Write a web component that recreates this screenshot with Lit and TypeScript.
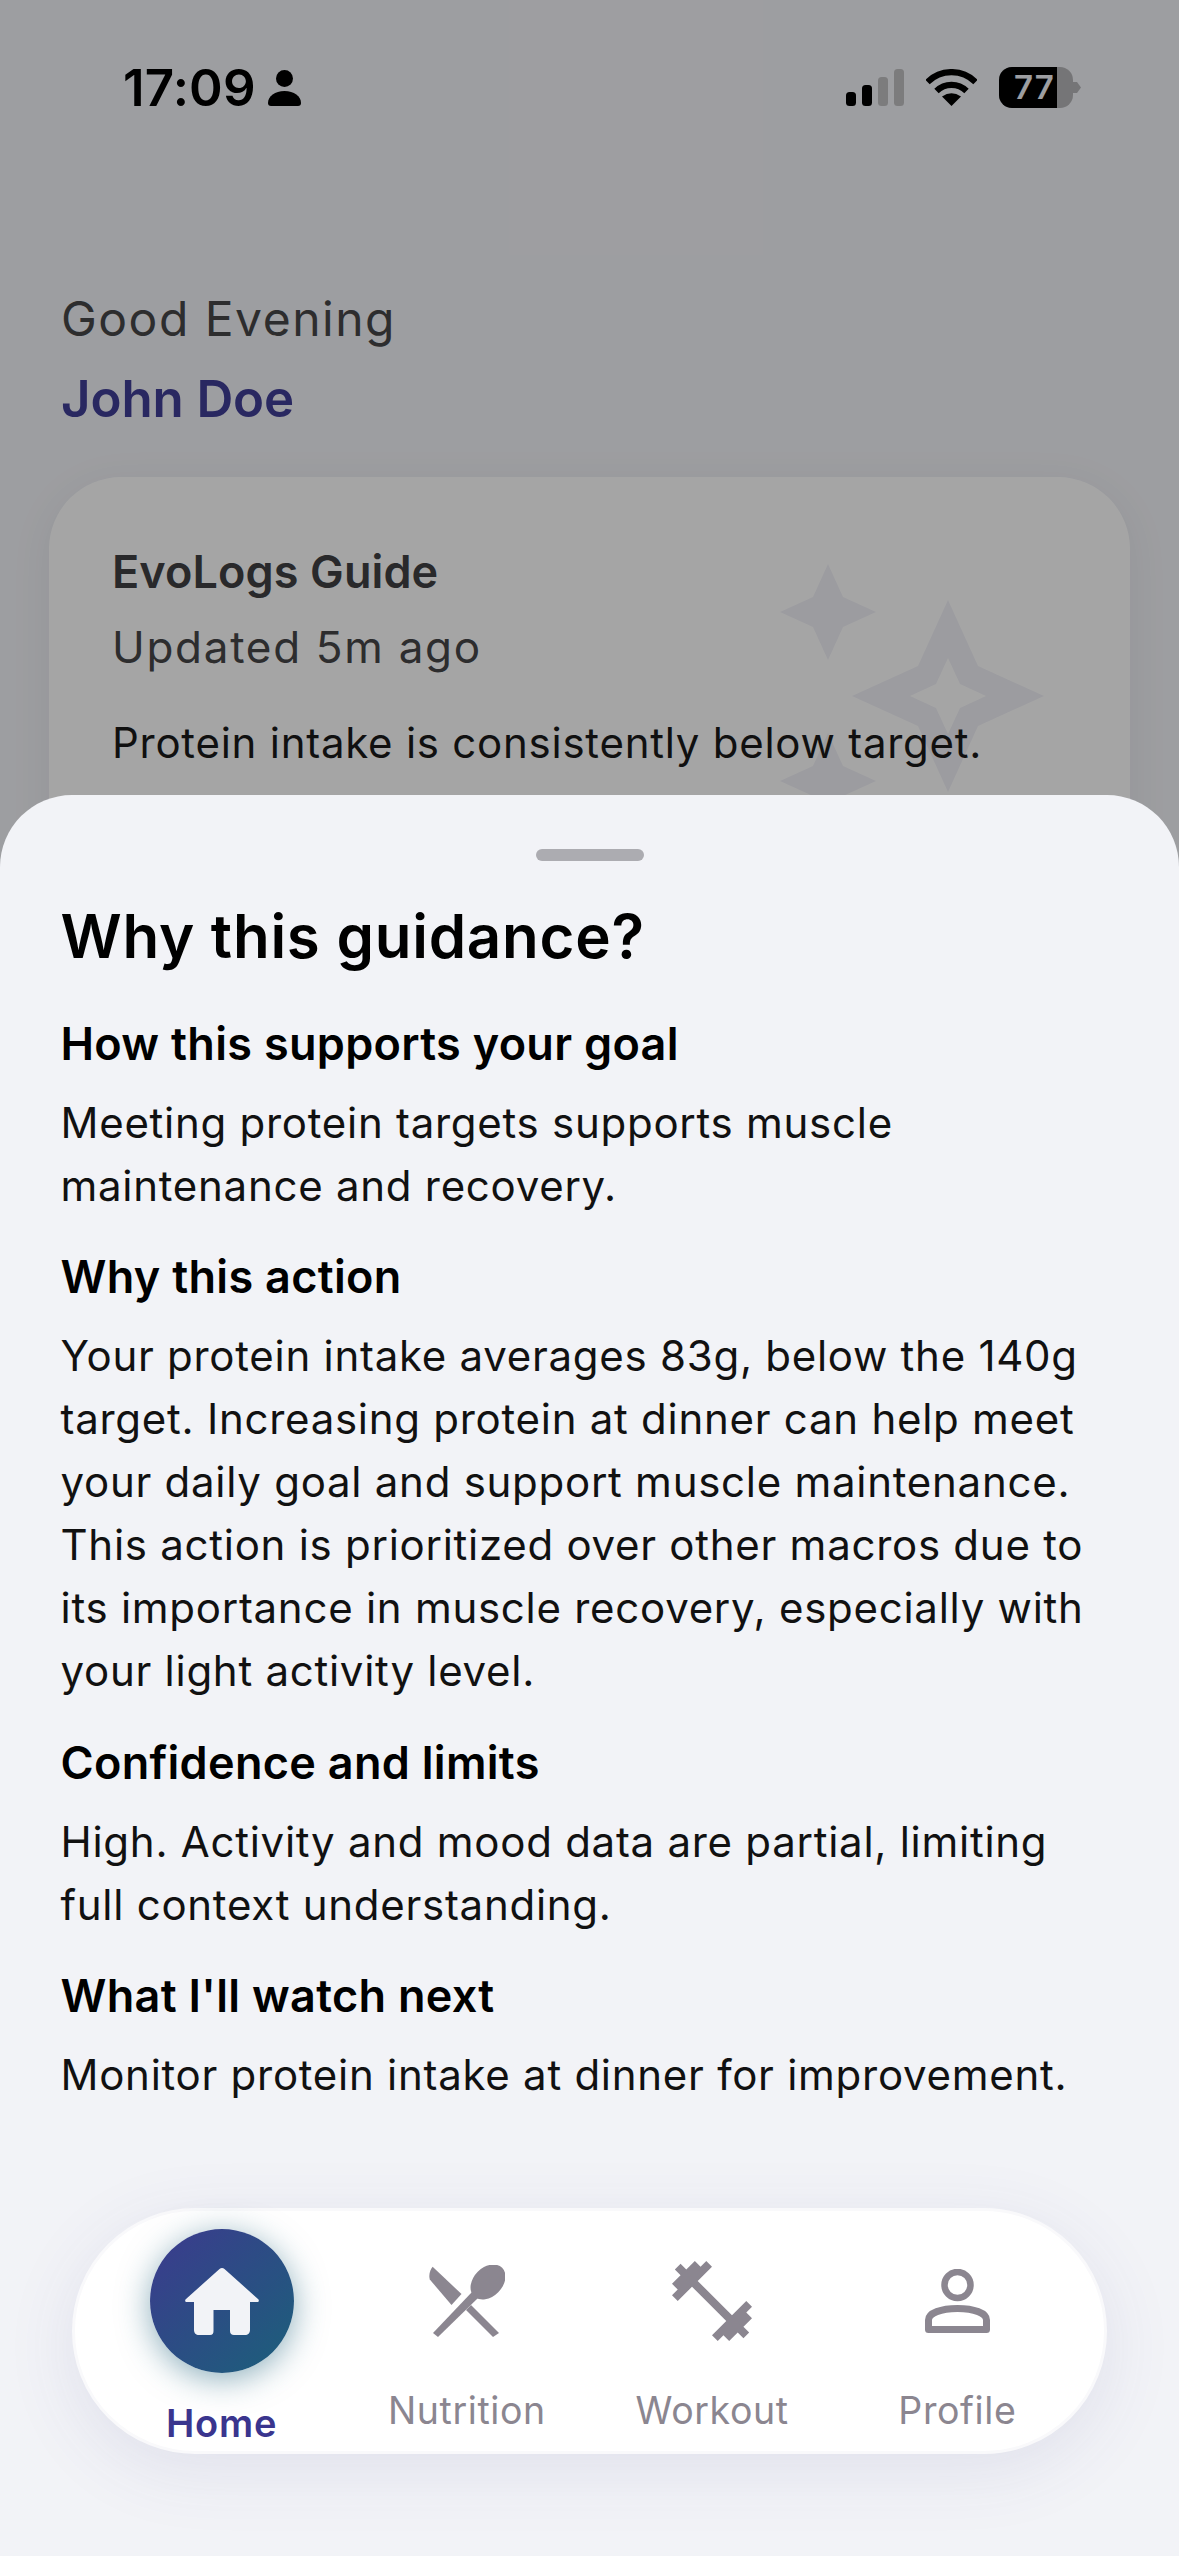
import { LitElement, html, css, svg } from "lit";
import { customElement } from "lit/decorators.js";

const navItems = [
  { label: "Nutrition", icon: svg`<svg class="ic" width="76" height="72" viewBox="0 0 76 72"><path d="M3.6 1.7C1 5 -.5 10 .8 14.5L22.5 40 32.5 29Z"/><path d="M42 40 70 68 64 72 37 45Z"/><ellipse cx="59" cy="17" rx="20" ry="14.5" transform="rotate(-45 59 17)"/><path d="M43 27 4 68 9 72 49 33Z"/></svg>` },
  { label: "Workout", icon: svg`<svg class="ic" width="96" height="96" viewBox="0 0 24 24"><path d="M20.57 14.86L22 13.43 20.57 12 17 15.57 8.43 7 12 3.43 10.57 2 9.14 3.43 7.71 2 5.57 4.14 4.14 2.71 2.71 4.14l1.43 1.43L2 7.71l1.43 1.43L2 10.57 3.43 12 7 8.43 15.57 17 12 20.57 13.43 22l1.43-1.43L16.29 22l2.14-2.14 1.43 1.43 1.43-1.43-1.43-1.43L22 16.29z"/></svg>` },
  { label: "Profile", icon: svg`<svg class="ic" width="65" height="64" viewBox="0 0 65 64"><circle cx="32.5" cy="16" r="13" fill="none" stroke="#8b8690" stroke-width="6.5"/><path d="M3.5 60.5V51C3.5 44 16 39.5 32.5 39.5S61.5 44 61.5 51V60.5Z" fill="none" stroke="#8b8690" stroke-width="7" stroke-linejoin="round"/></svg>` },
];

const sections = [
  { h: "How this supports your goal", lines: ["Meeting protein targets supports muscle", "maintenance and recovery."] },
  { h: "Why this action", lines: ["Your protein intake averages 83g, below the 140g", "target. Increasing protein at dinner can help meet", "your daily goal and support muscle maintenance.", "This action is prioritized over other macros due to", "its importance in muscle recovery, especially with", "your light activity level."] },
  { h: "Confidence and limits", lines: ["High. Activity and mood data are partial, limiting", "full context understanding."] },
  { h: "What I'll watch next", lines: ["Monitor protein intake at dinner for improvement."] },
];

@customElement("app-root")
export class AppRoot extends LitElement {
  static styles = css`
    :host { display: block; position: relative; height: 2556px; overflow: hidden; background: #f2f3f7; font-family: Inter, "Liberation Sans", sans-serif; color: #000; }
    .page { display: flex; flex-direction: column; }
    .status { display: flex; align-items: flex-start; padding: 67px 98px 0 123px; height: 41px; }
    .time { font-size: 51px; line-height: 41px; font-weight: 600; letter-spacing: .2px; }
    .person { margin: 3px 0 0 12.500px; }
    .status-right { margin-left: auto; display: flex; gap: 22px; align-items: flex-start; padding-top: 2px; }
    .battery { display: flex; align-items: center; margin-top: -2px; }
    .bat-body { position: relative; width: 74px; height: 41px; border-radius: 13px; overflow: hidden; background: #b4b4b7; }
    .bat-fill { position: absolute; left: 0; top: 0; bottom: 0; width: 58px; background: #000; }
    .bat-text { position: absolute; left: 15px; top: 0; font-size: 33px; line-height: 41px; font-weight: 600; letter-spacing: 1px; color: #f2f3f7; }
    .bat-nub { width: 8px; height: 11px; background: #b4b4b7; clip-path: polygon(0 0, 50% 0, 100% 50%, 50% 100%, 0 100%); }
    .greeting { margin: 0; padding: 182px 61px 0; font-size: 48px; line-height: 58px; color: #464648; letter-spacing: 1.5px; }
    .name { margin: 0; padding: 22px 61px 0; font-size: 51px; line-height: 58px; font-weight: 600; color: #403e96; letter-spacing: -.1px; }
    .card { position: relative; margin: 49px 49px 0; height: 500px; background: #fefefe; border-radius: 72px; padding: 67px 63px; box-sizing: border-box; box-shadow: 0 8px 40px rgba(60,60,90,.08); }
    .stars { position: absolute; left: 731px; top: 87px; }
    .card > p { position: relative; margin: 0; }
    .card-title { font-size: 45px; line-height: 56px; font-weight: 600; color: #3f3f42; letter-spacing: .1px; }
    .card-sub { font-size: 44px; line-height: 56px; margin-top: 19px !important; color: #464648; letter-spacing: 1.7px; }
    .card-text { font-size: 42px; line-height: 63px; margin-top: 36px !important; color: #1a1a1a; letter-spacing: .75px; }
    .scrim { position: absolute; inset: 0; background: rgba(0,0,0,.35); }
    .sheet { position: absolute; left: 0; right: 0; top: 795px; bottom: 0; background: #f2f3f7; border-radius: 72px 72px 0 0; display: flex; flex-direction: column; }
    .handle { width: 108px; height: 12px; border-radius: 6px; background: #acacb1; margin: 53.500px auto 0; }
    .content { padding: 0 60.500px; }
    h1 { margin: 40px 0 0; font-size: 60px; line-height: 70px; font-weight: 600; letter-spacing: .75px; }
    h2 { margin: 32.500px 0 0; font-size: 45px; line-height: 56px; font-weight: 600; letter-spacing: .3px; }
    section:first-of-type h2 { margin-top: 45px; }
    section p { margin: 0; font-size: 42px; line-height: 63px; letter-spacing: .73px; color: #111; }
    .lines { margin-top: 19px; }
    nav { display: grid; grid-template-columns: repeat(4, 1fr); margin: auto 72px 102px; height: 246px; box-sizing: border-box; padding: 0 24px; background: #fff; border: 3px solid #f9f9fb; border-radius: 123px; box-shadow: 0 16px 70px rgba(70,70,140,.1); }
    .item { display: flex; flex-direction: column; align-items: center; }
    .slot { height: 144px; margin-top: 18px; display: flex; align-items: center; justify-content: center; }
    .circle { width: 144px; height: 144px; border-radius: 50%; background: linear-gradient(135deg, #3c3a8e, #1b607a); box-shadow: 0 6px 32px rgba(27,96,122,.5); display: flex; align-items: center; justify-content: center; }
    .ic { fill: #8b8690; display: block; }
    .label { font-size: 37.500px; line-height: 44px; color: #8b8690; margin-top: 16px; letter-spacing: .6px; }
    .active .label { color: #3a358e; font-weight: 600; font-size: 38px; letter-spacing: .8px; margin-top: 28px; }
  `;

  render() {
    return html`
      <div class="page">
        <div class="status">
          <span class="time">17:09</span>
          <svg class="person" width="33" height="36" viewBox="0 0 33 36"><circle cx="16.5" cy="8.5" r="8.5"/><path d="M0 33C0 26 7 21 16.5 21S33 26 33 33C33 35 32 36 30 36H3C1 36 0 35 0 33Z"/></svg>
          <div class="status-right">
            <svg width="58" height="37" viewBox="0 0 58 37"><rect y="23" width="10" height="14" rx="3.5"/><rect x="16" y="16" width="10" height="21" rx="3.5"/><rect x="32" y="8" width="10" height="29" rx="3.5" fill="#bfbfc1"/><rect x="48" width="10" height="37" rx="3.5" fill="#bfbfc1"/></svg>
            <svg width="51" height="37" viewBox="0 0 51 37"><path d="M1.5 13A34 34 0 0 1 49.5 13M10.5 22A21.3 21.3 0 0 1 40.5 22" fill="none" stroke="#000" stroke-width="6.2"/><path d="M25.5 37 16 27.5Q25.5 21 35 27.5Z"/></svg>
            <div class="battery">
              <div class="bat-body"><div class="bat-fill"></div><div class="bat-text">77</div></div>
              <div class="bat-nub"></div>
            </div>
          </div>
        </div>
        <p class="greeting">Good Evening</p>
        <p class="name">John Doe</p>
        <div class="card">
          <svg class="stars" width="270" height="300" viewBox="0 0 270 300" fill="#f0f0f6">
            <path d="M48 0 63 33 96 48 63 63 48 96 33 63 0 48 33 33Z"/>
            <path d="M48 169 63 202 96 217 63 232 48 265 33 232 0 217 33 202Z"/>
            <path fill-rule="evenodd" d="M168 36 198 102 264 132 198 162 168 228 138 162 72 132 138 102ZM168 94 156 120 130 132 156 144 168 170 180 144 206 132 180 120Z"/>
          </svg>
          <p class="card-title">EvoLogs Guide</p>
          <p class="card-sub">Updated 5m ago</p>
          <p class="card-text">Protein intake is consistently below target.</p>
        </div>
      </div>
      <div class="scrim"></div>
      <div class="sheet">
        <div class="handle"></div>
        <div class="content">
          <h1>Why this guidance?</h1>
          ${sections.map(s => html`<section><h2>${s.h}</h2><div class="lines">${s.lines.map(l => html`<p>${l}</p>`)}</div></section>`)}
        </div>
        <nav>
          <div class="item active">
            <div class="slot"><div class="circle">
              <svg width="74" height="67" viewBox="0 0 74 67" fill="#f2f3f7"><path d="M34.5 1 1 31C-.5 32.5 0 34 2 34H9V62C9 65 11 67 14 67H25C27.500 67 28.500 65.500 28.500 63V42H45V63C45 65.500 46.500 67 49 67H60C63 67 65 65 65 62V34H72C74 34 74.500 32.500 73 31L39.500 1C38 -.3 36 -.3 34.500 1Z"/></svg>
            </div></div>
            <span class="label">Home</span>
          </div>
          ${navItems.map(n => html`<div class="item"><div class="slot">${n.icon}</div><span class="label">${n.label}</span></div>`)}
        </nav>
      </div>
    `;
  }
}
